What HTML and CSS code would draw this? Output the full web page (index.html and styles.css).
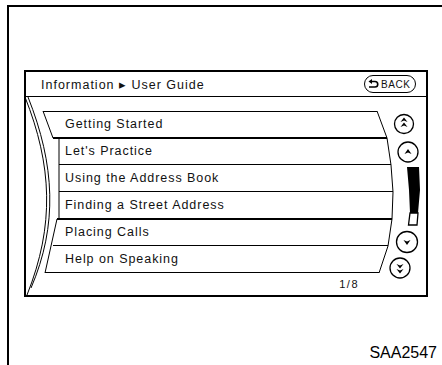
FILE: index.html
```html
<!DOCTYPE html>
<html lang="en">
<head>
    <meta charset="UTF-8">
    <title>User Guide</title>
    <link rel="stylesheet" href="styles.css">
</head>
<body>
    <div class="page">
        <div class="screen">
            <!-- drum list outlines and scroll controls -->
            <svg class="drum" viewBox="24 70 404 227" width="404" height="227">
                <g fill="none" stroke="#000" stroke-width="1">
                    <path d="M25 97 C52 165, 55 225, 27 295"/>
                    <path d="M28 97 C55 165, 58 225, 31 288"/>
                    <path d="M43 111 L53 138"/>
                    <path d="M59 138 L59 219"/>
                    <path d="M57 219 L51 246 L45 273"/>
                    <path d="M377 111 L387 138 L391 165 L393 192 L392 219 L388 246 L379 273"/>
                    <path d="M43 111.5 H377"/>
                    <path d="M59 164.5 H391"/>
                    <path d="M59 191.5 H393"/>
                    <path d="M53 245.5 H388"/>
                    <path d="M45 272.5 H379"/>
                </g>
                <g stroke="#000" stroke-width="2">
                    <path d="M53 138 H387"/>
                    <path d="M57 219 H392"/>
                </g>
                <g fill="none" stroke="#000" stroke-width="1.3">
                    <circle cx="404" cy="124" r="9.5"/>
                    <circle cx="408" cy="152" r="10"/>
                    <circle cx="407" cy="242" r="10.5"/>
                    <circle cx="400" cy="268" r="10"/>
                </g>
                <g fill="#000">
                    <path d="M400.5 122 L404 117.5 L407.5 122 L404 120.5 Z"/>
                    <path d="M400.5 127 L404 122.5 L407.5 127 L404 125.5 Z"/>
                    <path d="M404.5 154 L408 149 L411.5 154 L408 152.5 Z"/>
                    <path d="M403.5 240 L407 245 L410.5 240 L407 241.5 Z"/>
                    <path d="M396.5 264 L400 268.5 L403.5 264 L400 265.5 Z"/>
                    <path d="M396.5 269 L400 273.5 L403.5 269 L400 270.5 Z"/>
                    <path d="M407 167 L419 167 L420 190 L418 213 L410 213 L409 190 Z"/>
                </g>
                <path d="M410 213 L418 213 L417 225 L408.5 225 Z" fill="#fff" stroke="#000" stroke-width="1.3"/>
            </svg>

            <div class="header">
                <span class="crumb">Information ▸ User Guide</span>
                <span class="back">
                    <svg width="11" height="10" viewBox="0 0 11 10">
                        <path d="M0.5 2.5 L4 0 L4 5 Z" fill="#000"/>
                        <path d="M4 2.5 H7 A2.75 2.75 0 0 1 7 8 H1" fill="none" stroke="#000" stroke-width="1.6"/>
                    </svg>BACK</span>
            </div>

            <ul class="list">
                <li>Getting Started</li>
                <li>Let's Practice</li>
                <li>Using the Address Book</li>
                <li>Finding a Street Address</li>
                <li>Placing Calls</li>
                <li>Help on Speaking</li>
            </ul>
            <div class="pager">1/8</div>
        </div>
        <div class="caption">SAA2547</div>
    </div>
</body>
</html>
```

FILE: styles.css
```css
html, body {
    margin: 0;
    height: 100%;
    overflow: hidden;
    background-color: #ffffff;
}
body {
    font-family: "Liberation Sans", Arial, sans-serif;
    color: #111;
}
.page {
    margin: 5px 0 0 7px;
    border-top: 2px solid #000;
    border-left: 2px solid #000;
    padding: 63px 0 0 15px;
    height: 360px;
    box-sizing: border-box;
}
.screen {
    position: relative;
    width: 404px;
    height: 227px;
    border: 2px solid #000;
    box-sizing: border-box;
}
.drum {
    position: absolute;
    left: -2px;
    top: -2px;
}
.header {
    height: 24px;
    border-bottom: 1px solid #000;
    display: flex;
    align-items: center;
    justify-content: space-between;
    padding: 0 10px 0 15px;
}
.crumb {
    font-size: 12.5px;
    letter-spacing: 1px;
}
.back {
    display: flex;
    align-items: center;
    gap: 2px;
    height: 18px;
    width: 52px;
    box-sizing: border-box;
    border: 1.5px solid #000;
    border-radius: 9px;
    padding-left: 3px;
    font-size: 10px;
    letter-spacing: 0.6px;
}
.list {
    list-style: none;
    margin: 14px 0 0 0;
    padding: 0 0 0 39px;
    position: relative;
}
.list li {
    height: 27px;
    line-height: 27px;
    font-size: 12.5px;
    letter-spacing: 0.95px;
}
.pager {
    position: relative;
    height: 22px;
    line-height: 22px;
    text-align: right;
    padding-right: 67px;
    font-size: 11px;
    letter-spacing: 1.5px;
}
.caption {
    margin-top: 47px;
    text-align: right;
    padding-right: 5px;
    font-size: 16px;
    line-height: 18px;
    color: #000;
}
```
